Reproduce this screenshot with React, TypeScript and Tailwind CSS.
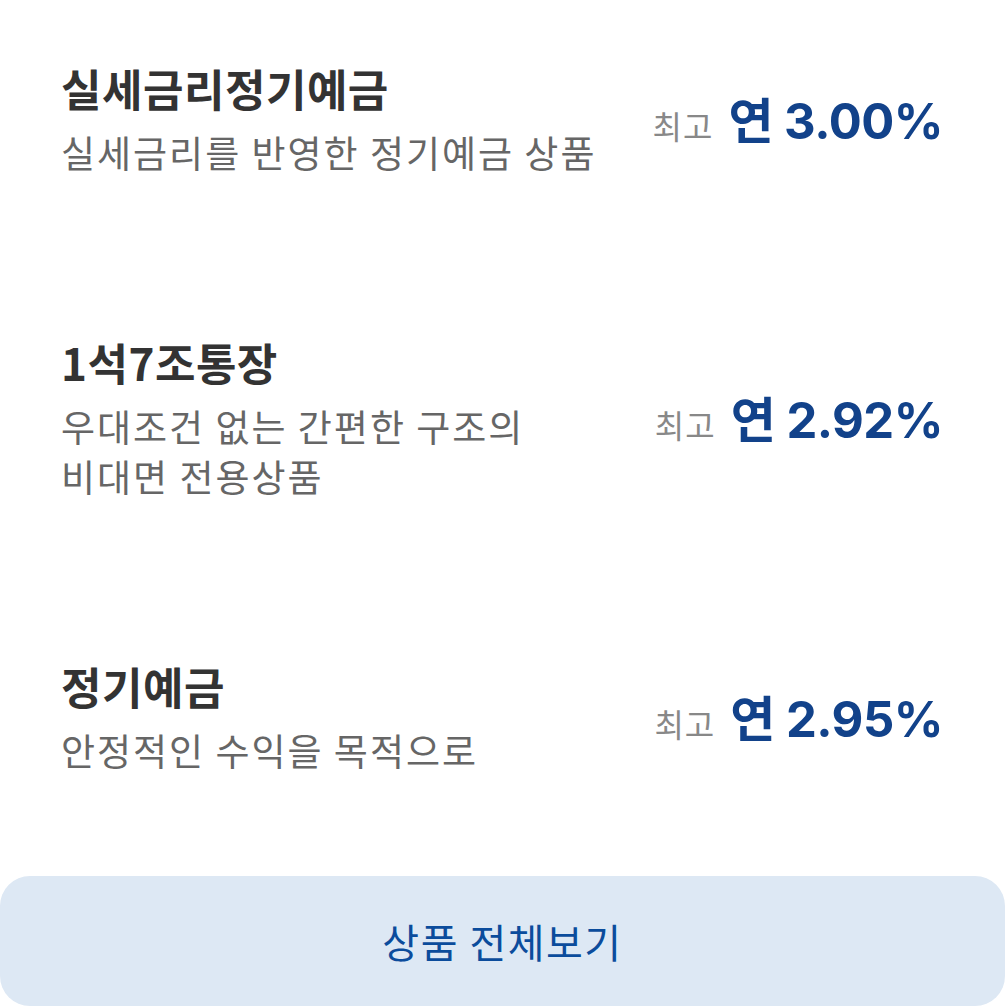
const products = [
  { name: '실세금리정기예금', desc: ['실세금리를 반영한 정기예금 상품'], rate: '3.00%' },
  { name: '1석7조통장', desc: ['우대조건 없는 간편한 구조의', '비대면 전용상품'], rate: '2.92%' },
  { name: '정기예금', desc: ['안정적인 수익을 목적으로'], rate: '2.95%' },
];

export default function App() {
  return (
    <div
      className="w-[1005px] h-[1008px] bg-white overflow-hidden flex flex-col"
      style={{ fontFamily: '"Noto Sans CJK KR", "Noto Sans", sans-serif' }}
    >
      {/* product list */}
      <div className="flex flex-col gap-[158px] pt-[61px] pl-[61px] pr-[62px]">
        {products.map((p) => (
          <div key={p.name} className="flex items-center justify-between">
            <div className="flex flex-col">
              <div className="text-[44px] leading-[54px] font-bold text-[#333333] tracking-[0.5px]">
                {p.name}
              </div>
              <div className="mt-[12px] text-[37px] leading-[50px] text-[#666666] tracking-[2px]">
                {p.desc.map((line) => (
                  <div key={line}>{line}</div>
                ))}
              </div>
            </div>
            <div className="mt-[6px] flex items-baseline gap-[15px]">
              <span className="text-[32px] text-[#888888] tracking-[1px]">최고</span>
              <span
                className="text-[49px] font-bold text-[#12428a] tracking-[-0.5px]"
                style={{ fontFamily: 'Inter, "Noto Sans CJK KR", sans-serif' }}
              >
                연 {p.rate}
              </span>
            </div>
          </div>
        ))}
      </div>

      {/* view all button */}
      <button className="mt-auto mb-[2px] h-[130px] w-full rounded-[30px] bg-[#dde8f4] text-[40px] text-[#0b4c9c] tracking-[1.5px] cursor-pointer">
        상품 전체보기
      </button>
    </div>
  );
}
